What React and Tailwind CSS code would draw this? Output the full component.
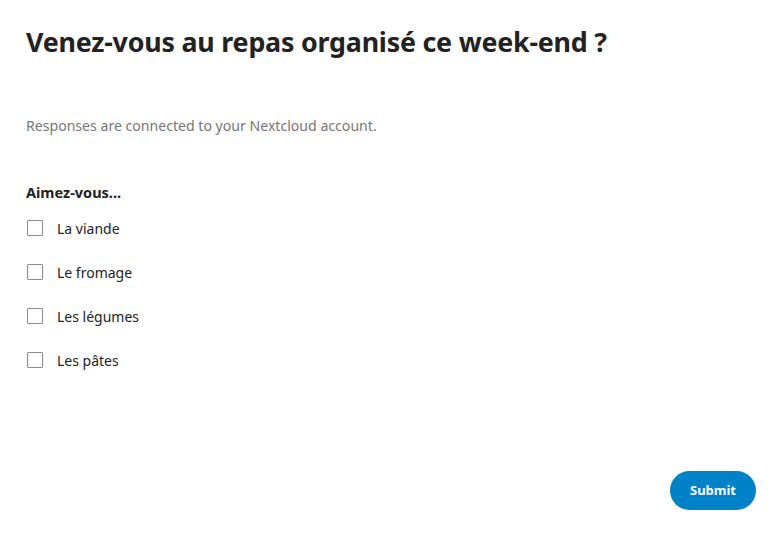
import React from 'react';

const options = ['La viande', 'Le fromage', 'Les légumes', 'Les pâtes'];

const App = () => {
  return (
    <div className="w-[782px] h-[536px] bg-white text-[#222] flex flex-col" style={{ fontFamily: '"Noto Sans", "Open Sans", sans-serif' }}>
      <div className="px-[26px] pt-[23px]">
        <h1 className="text-[26.8px] leading-[38px] font-bold text-[#222] tracking-[-0.2px]">
          Venez-vous au repas organisé ce week-end ?
        </h1>
        <p className="mt-[54px] text-[14.1px] leading-[22px] text-[#767676]">
          Responses are connected to your Nextcloud account.
        </p>
        <h2 className="mt-[44px] text-[14.5px] leading-[22px] font-bold">Aimez-vous...</h2>
        <ul className="mt-[3px] flex flex-col">
          {options.map((opt) => (
            <li key={opt} className="h-[44px] flex items-center gap-[14px]">
              <span className="w-[16px] h-[16px] border border-[#8a8a8a] rounded-[1px] ml-[1px]" />
              <span className="text-[14px]">{opt}</span>
            </li>
          ))}
        </ul>
      </div>
      <div className="flex justify-end px-[26px] mt-auto mb-[26px]">
        <button className="h-[39px] w-[86px] rounded-full bg-[#0082c9] text-white text-[13px] font-bold">
          Submit
        </button>
      </div>
    </div>
  );
};

export default App;
